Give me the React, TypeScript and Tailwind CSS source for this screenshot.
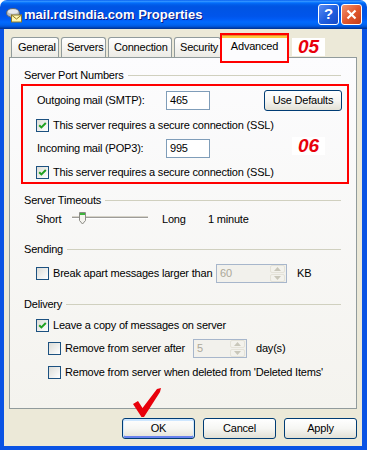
import React from "react";

function CheckBox({ checked = false }: { checked?: boolean }) {
  return (
    <span className="flex h-[13px] w-[13px] shrink-0 items-center justify-center border border-[#1C5180] bg-linear-to-br from-[#DCDCD7] to-white">
      {checked && (
        <svg width="11" height="11" viewBox="0 0 11 11">
          <path d="M2.2 5.2 L4.4 7.4 L8.8 3" stroke="#21A121" strokeWidth="2" fill="none" />
        </svg>
      )}
    </span>
  );
}

function GroupHeader({ label }: { label: string }) {
  return (
    <div className="flex h-[18px] items-center gap-[4px]">
      <span>{label}</span>
      <div className="h-px flex-1 bg-[#D0D0BF]" />
    </div>
  );
}

function SpinBox({ value, className }: { value: string; className: string }) {
  return (
    <div className={`flex h-[19px] items-center border border-[#A7B6CB] bg-[#F2F1EC] pl-[3px] text-[#ACA899] ${className}`}>
      <span className="flex-1">{value}</span>
      <div className="mr-px flex h-[17px] w-[15px] flex-col gap-px">
        <span className="flex flex-1 items-center justify-center rounded-[2px] border border-[#E4E2D8] bg-[#F3F2EC]">
          <svg width="7" height="4" viewBox="0 0 7 4"><path d="M0 4 L3.5 0 L7 4 Z" fill="#C9C7BA" /></svg>
        </span>
        <span className="flex flex-1 items-center justify-center rounded-[2px] border border-[#E4E2D8] bg-[#F3F2EC]">
          <svg width="7" height="4" viewBox="0 0 7 4"><path d="M0 0 L3.5 4 L7 0 Z" fill="#C9C7BA" /></svg>
        </span>
      </div>
    </div>
  );
}

function XPButton({ children, className = "" }: { children: React.ReactNode; className?: string }) {
  return (
    <button className={`flex h-[21px] items-center justify-center rounded-[3px] border border-[#003C74] bg-linear-to-b from-white via-[#F6F6F3] to-[#E2E0D5] text-black ${className}`}>
      {children}
    </button>
  );
}

function Slider() {
  return (
    <svg width="90" height="16" viewBox="0 0 90 16">
      <rect x="0" y="6" width="76" height="1" fill="#9D9C99" />
      <rect x="0" y="7" width="76" height="1" fill="#FFFFFF" />
      <rect x="0" y="5" width="76" height="1" fill="#D6D3C8" />
      <path d="M7.5 1.5 h6 v8 l-3 3.5 l-3 -3.5 z" fill="#F4F3EE" stroke="#8A8A84" />
      <rect x="8" y="2" width="5" height="2" fill="#3CB43C" />
    </svg>
  );
}

export default function App() {
  return (
    <div className="h-[450px] w-[367px] bg-white text-[11px] tracking-[-0.2px] text-black font-['Liberation_Sans',Arial,sans-serif]">
      <div className="flex h-full w-full flex-col overflow-hidden rounded-t-[7px]">
        {/* Title bar */}
        <div className="flex h-[29px] shrink-0 items-center bg-[linear-gradient(180deg,#0058EE_0%,#3593FF_4%,#288EFF_6%,#127DFF_8%,#036FFC_10%,#0262EE_14%,#0057E5_20%,#0054E3_24%,#0055EB_56%,#005BF5_66%,#026AFE_76%,#0062EF_86%,#0052D6_92%,#0040AB_96%,#003092_100%)] pl-[6px] pr-[5px]">
          <svg width="16" height="16" viewBox="0 0 16 16" className="shrink-0">
            <ellipse cx="7" cy="6" rx="6.5" ry="4.5" fill="#B8BCC2" stroke="#5E6670" strokeWidth="1" />
            <ellipse cx="7" cy="4.5" rx="5" ry="2.2" fill="#E6E8EC" />
            <rect x="5.5" y="8" width="10" height="7" fill="#FFF6B0" stroke="#8C7A2A" strokeWidth="1" />
            <path d="M5.5 8 L10.5 12 L15.5 8" stroke="#8C7A2A" strokeWidth="1" fill="none" />
          </svg>
          <span className="ml-[2px] text-[13px] font-bold tracking-normal text-white [text-shadow:1px_1px_#0A1883]">
            mail.rdsindia.com Properties
          </span>
          <div className="ml-auto flex gap-[2px]">
            <div className="flex h-[21px] w-[21px] items-center justify-center rounded-[3px] border border-white bg-linear-to-br from-[#5B8CF2] via-[#2060E0] to-[#1548C8] text-[15px] font-bold text-white">
              ?
            </div>
            <div className="flex h-[21px] w-[21px] items-center justify-center rounded-[3px] border border-white bg-linear-to-br from-[#F0926E] via-[#E2582F] to-[#C43C18]">
              <svg width="11" height="11" viewBox="0 0 11 11">
                <path d="M1.5 1.5 L9.5 9.5 M9.5 1.5 L1.5 9.5" stroke="white" strokeWidth="2.2" />
              </svg>
            </div>
          </div>
        </div>

        {/* Frame */}
        <div className="flex flex-1 flex-col bg-[#0A53E4] pb-[4px] pl-[4px] pr-[5px]">
          <div className="relative flex flex-1 flex-col bg-[#ECE9D8] px-[5px] pb-[7px] pt-[4px]">
            {/* Tabs */}
            <div className="relative flex h-[24px] items-end pl-[2px]">
              <div className="flex h-[20px] w-[48px] items-center rounded-t-[3px] border border-b-0 border-[#919B9C] bg-linear-to-b from-white to-[#ECEBE5] pl-[6px]">
                General
              </div>
              <div className="ml-[2px] flex h-[20px] w-[45px] items-center rounded-t-[3px] border border-b-0 border-[#919B9C] bg-linear-to-b from-white to-[#ECEBE5] pl-[5px]">
                Servers
              </div>
              <div className="ml-[2px] flex h-[20px] w-[64px] items-center rounded-t-[3px] border border-b-0 border-[#919B9C] bg-linear-to-b from-white to-[#ECEBE5] pl-[5px]">
                Connection
              </div>
              <div className="ml-[2px] flex h-[20px] w-[47px] items-center rounded-t-[3px] border border-b-0 border-[#919B9C] bg-linear-to-b from-white to-[#ECEBE5] pl-[5px]">
                Security
              </div>
              <div className="relative z-10 -mb-px flex h-[23px] w-[67px] flex-col rounded-t-[3px] border-x border-[#919B9C] bg-[#FCFCFE]">
                <div className="h-px rounded-t-[3px] bg-[#E68B2C]" />
                <div className="h-[2px] bg-[#FFC73C]" />
                <div className="flex flex-1 items-center justify-center pb-[4px]">Advanced</div>
              </div>
              {/* annotation 05 */}
              <div className="absolute left-[211px] top-0 z-20 h-[30px] w-[69px] border-2 border-[#FF0000]" />
              <div className="absolute left-[283px] top-[5px] flex h-[18px] w-[33px] items-center justify-center bg-white text-[19px] font-bold italic tracking-normal text-[#E8000B]">
                05
              </div>
            </div>

            {/* Panel */}
            <div className="h-[352px] border border-[#919B9C] bg-linear-to-b from-[#FCFCFE] to-[#F4F3EE] pl-[14px] pr-[15px] pt-[8px]">
              <GroupHeader label="Server Port Numbers" />
              <div className="relative -ml-[3px] -mr-[8px] border-2 border-[#FF0000] pl-[13px] pr-[5px] pt-[4px]">
                <div className="flex h-[21px] items-center">
                  <span className="w-[130px] pl-px">Outgoing mail (SMTP):</span>
                  <div className="flex h-[19px] w-[44px] items-center border border-[#7F9DB9] bg-white pl-[3px]">465</div>
                  <XPButton className="ml-auto w-[78px]">Use Defaults</XPButton>
                </div>
                <div className="flex h-[28px] items-center gap-[4px]">
                  <CheckBox checked />
                  <span>This server requires a secure connection (SSL)</span>
                </div>
                <div className="flex h-[19px] items-center">
                  <span className="w-[130px] pl-px">Incoming mail (POP3):</span>
                  <div className="flex h-[19px] w-[44px] items-center border border-[#7F9DB9] bg-white pl-[3px]">995</div>
                </div>
                <div className="mt-[5px] flex h-[19px] items-center gap-[4px]">
                  <CheckBox checked />
                  <span>This server requires a secure connection (SSL)</span>
                </div>
                {/* annotation 06 */}
                <div className="absolute left-[269px] top-[51px] flex h-[18px] w-[33px] items-center justify-center bg-white text-[19px] font-bold italic tracking-normal text-[#E8000B]">
                  06
                </div>
              </div>

              <div className="mt-[7px]">
                <GroupHeader label="Server Timeouts" />
              </div>
              <div className="flex h-[20px] items-center pl-[12px]">
                <span className="w-[36px]">Short</span>
                <Slider />
                <span className="w-[46px]">Long</span>
                <span>1 minute</span>
              </div>

              <div className="mt-[11px]">
                <GroupHeader label="Sending" />
              </div>
              <div className="mt-[5px] flex h-[20px] items-center pl-[12px]">
                <CheckBox />
                <span className="ml-[4px] w-[163px]">Break apart messages larger than</span>
                <SpinBox value="60" className="w-[71px]" />
                <span className="ml-[10px]">KB</span>
              </div>

              <div className="mt-[12px]">
                <GroupHeader label="Delivery" />
              </div>
              <div className="mt-[2px] flex h-[20px] items-center gap-[4px] pl-[12px]">
                <CheckBox checked />
                <span>Leave a copy of messages on server</span>
              </div>
              <div className="mt-[3px] flex h-[21px] items-center pl-[24px]">
                <CheckBox />
                <span className="ml-[4px] w-[128px]">Remove from server after</span>
                <SpinBox value="5" className="w-[54px]" />
                <span className="ml-[9px]">day(s)</span>
              </div>
              <div className="mt-[3px] flex h-[20px] items-center gap-[4px] pl-[24px]">
                <CheckBox />
                <span>Remove from server when deleted from 'Deleted Items'</span>
              </div>
            </div>

            {/* Buttons */}
            <div className="mt-[9px] flex justify-end gap-[8px]">
              <XPButton className="w-[73px] shadow-[inset_0_1px_0_1px_#CEE7FF,inset_0_-1px_0_1px_#6982EE]">OK</XPButton>
              <XPButton className="w-[73px]">Cancel</XPButton>
              <XPButton className="w-[73px]">Apply</XPButton>
            </div>

            {/* red tick annotation */}
            <svg className="absolute left-[129px] top-[359px]" width="29" height="30" viewBox="0 0 29 30">
              <path d="M0 16 L5 13 L9.5 20 L24 1 L28 0 L27 4 L11 29 L8.5 29 Z" fill="#E8000B" />
            </svg>
          </div>
        </div>
      </div>
    </div>
  );
}
